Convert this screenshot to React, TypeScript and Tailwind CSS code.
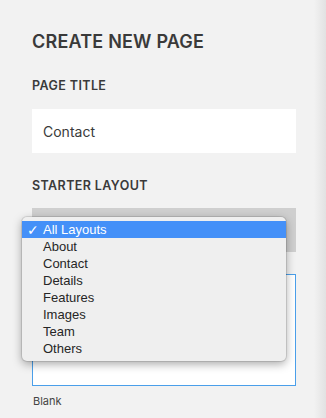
import React from 'react';

const layouts = ['All Layouts', 'About', 'Contact', 'Details', 'Features', 'Images', 'Team', 'Others'];

function LayoutMenu() {
  return (
    <div className="absolute left-[-10px] top-[9px] w-[264px] rounded-[5px] bg-[#efefef] py-[4px] shadow-[0_3px_10px_rgba(0,0,0,0.35)] ring-1 ring-black/10 font-['Liberation_Sans',sans-serif] text-[13px] text-[#262626]">
      {layouts.map((name, i) => (
        <div
          key={name}
          className={`flex h-[17px] items-center ${i === 0 ? 'bg-[#4490f8] text-white' : ''}`}
        >
          <span className="w-[21px] pl-[5px] font-['DejaVu_Sans',sans-serif] text-[14px] font-bold leading-none">
            {i === 0 ? '✓' : ''}
          </span>
          <span className="leading-none">{name}</span>
        </div>
      ))}
    </div>
  );
}

export default function App() {
  return (
    <div className="flex h-[418px] w-[326px] bg-[#f2f2f2] font-['Inter',sans-serif] text-[#3a3a3a]">
      <div className="flex-1 pl-[32px] pt-[30px]">
        <h1 className="text-[18px] font-semibold leading-[24px] tracking-[0.2px]">CREATE NEW PAGE</h1>

        <div className="mt-[24px] text-[12.5px] font-semibold leading-[16px] tracking-[0.4px]">PAGE TITLE</div>
        <div className="mt-[15px] flex h-[44px] w-[264px] items-center bg-white pl-[11px] text-[14px]">Contact</div>

        <div className="mt-[25px] text-[12.5px] font-semibold leading-[16px] tracking-[0.4px]">STARTER LAYOUT</div>
        <div className="relative mt-[14px] h-[44px] w-[264px] bg-[#cfcfcf]">
          <LayoutMenu />
        </div>

        <div className="mt-[22px] h-[112px] w-[264px] border border-[#4a9fea] bg-white" />
        <div className="mt-[8px] pl-[1px] text-[11px] leading-[14px] text-[#444]">Blank</div>
      </div>
      <div className="w-[12px] bg-gradient-to-r from-[#f2f2f2] to-[#e2e2e2]" />
    </div>
  );
}
